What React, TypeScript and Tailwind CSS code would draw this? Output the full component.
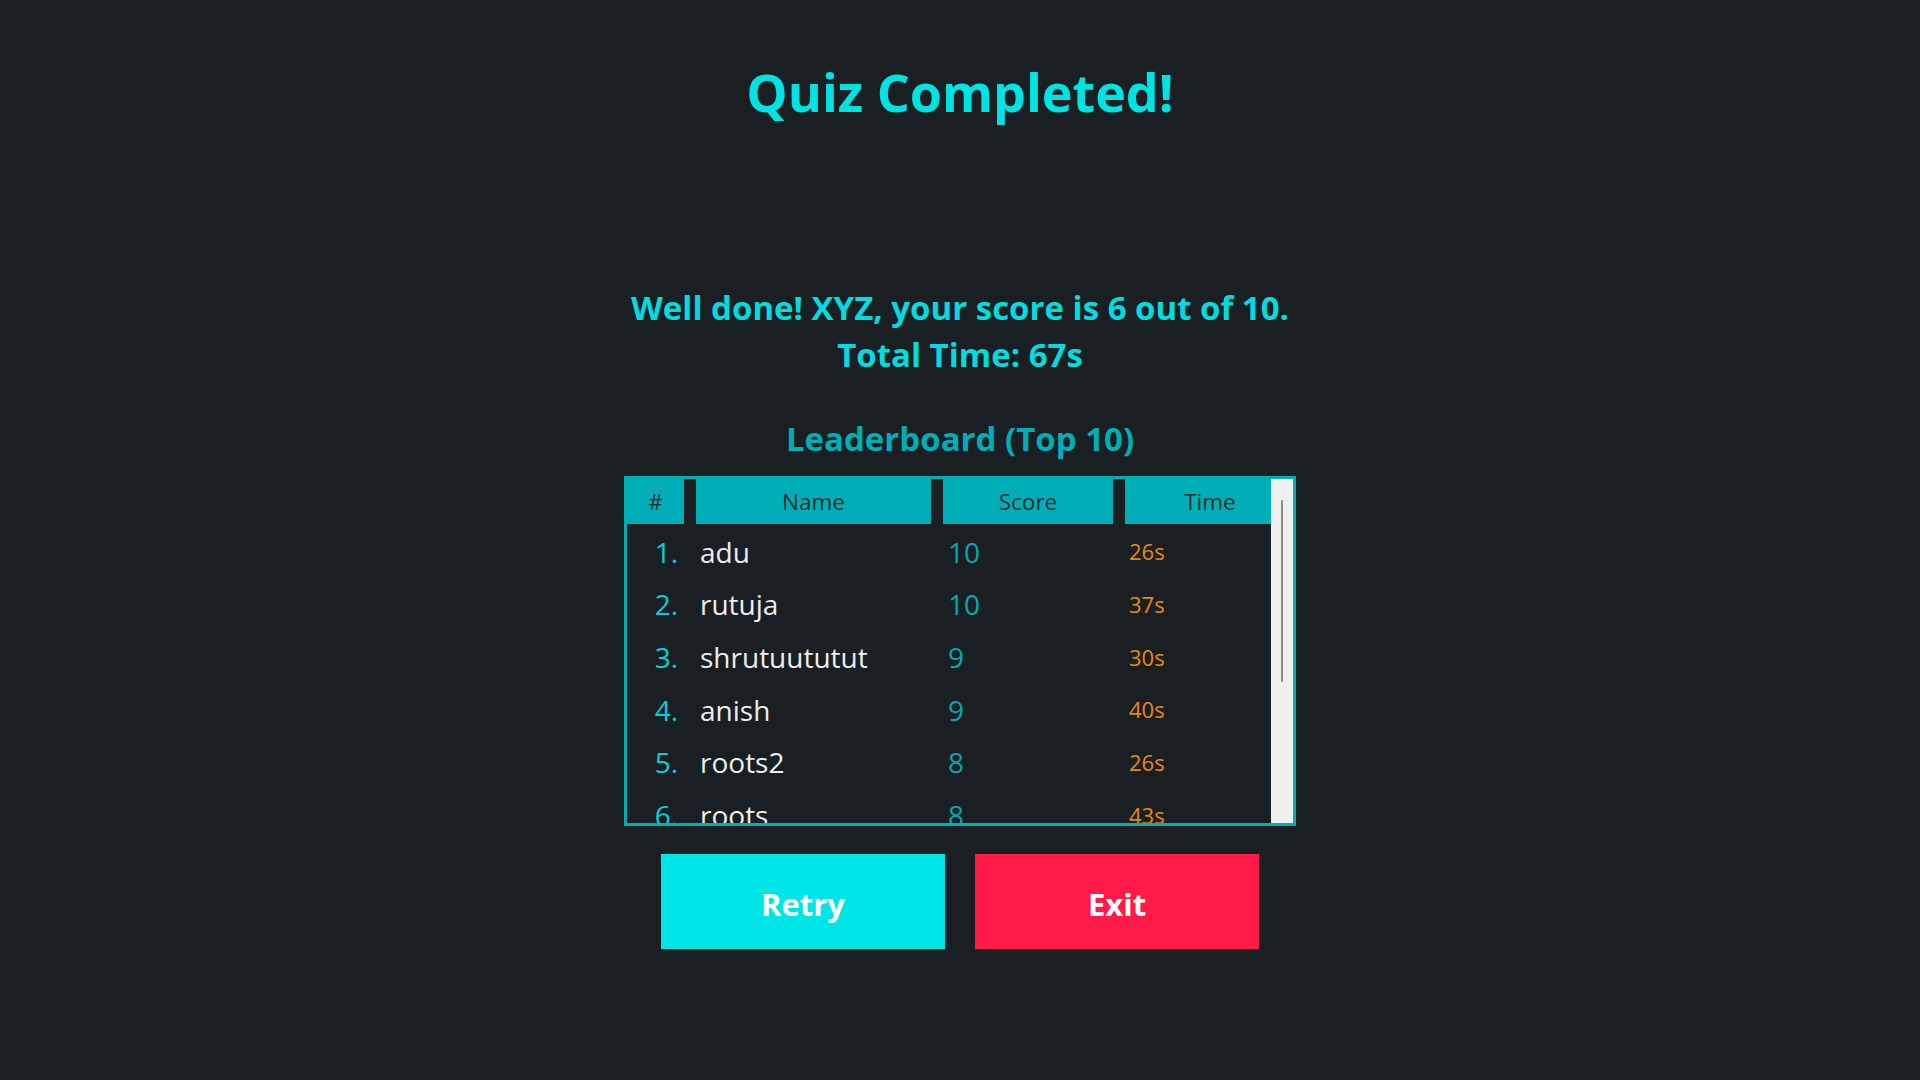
const LEADERS = [
  { name: "adu", score: 10, time: 26 },
  { name: "rutuja", score: 10, time: 37 },
  { name: "shrutuututut", score: 9, time: 30 },
  { name: "anish", score: 9, time: 40 },
  { name: "roots2", score: 8, time: 26 },
  { name: "roots", score: 8, time: 43 },
  { name: "meera", score: 7, time: 35 },
  { name: "kiran", score: 7, time: 48 },
  { name: "dev", score: 6, time: 31 },
  { name: "sam", score: 5, time: 52 },
];

const COLS = "grid grid-cols-[57px_235px_170px_146px] gap-x-[12px]";

export default function App() {
  return (
    <div className="min-h-screen w-full bg-[#191f23] flex flex-col items-center font-['Open_Sans',sans-serif]">
      <h1 className="mt-[61px] text-[52px] leading-[62px] font-bold text-[#00e3e3]">Quiz Completed!</h1>

      <p className="mt-[161px] text-center text-[33px] leading-[47px] font-bold text-[#00dcdf]">
        Well done! XYZ, your score is 6 out of 10.
        <br />
        Total Time: 67s
      </p>

      <h2 className="mt-[41px] text-[33px] leading-[40px] font-bold text-[#00aeb8]">Leaderboard (Top 10)</h2>

      <div className="mt-[17px] w-[672px] h-[350px] border-[3px] border-[#00aeb8] flex">
        {/* table body, clipped at the box edge */}
        <div className="w-[644px] h-full overflow-hidden">
          <div className={`${COLS} h-[45px] bg-[#191f23] text-[22.5px] text-[#1a2c30]`}>
            <div className="bg-[#00aeb8] flex items-center justify-center pt-[1px]">#</div>
            <div className="bg-[#00aeb8] flex items-center justify-center pt-[1px]">Name</div>
            <div className="bg-[#00aeb8] flex items-center justify-center pt-[1px]">Score</div>
            <div className="bg-[#00aeb8] flex items-center justify-center pt-[1px] pl-[24px]">Time</div>
          </div>
          {LEADERS.map((p, i) => (
            <div key={i} className={`${COLS} h-[52.65px] items-center pt-[3px]`}>
              <div className="text-right pr-[6px] text-[28px] text-[#00d2d8]">{i + 1}.</div>
              <div className="pl-[4px] text-[28px] text-[#eeeeee]">{p.name}</div>
              <div className="pl-[5px] text-[28px] text-[#00a9b4]">{p.score}</div>
              <div className="pl-[4px] text-[22px] text-[#e8890c]">{p.time}s</div>
            </div>
          ))}
        </div>
        {/* scrollbar */}
        <div className="w-[22px] h-full bg-[#f0f0f0] flex justify-center pt-[21px]">
          <div className="w-[2px] h-[182px] rounded-full bg-[#8a8a8a]" />
        </div>
      </div>

      <div className="mt-[28px] flex gap-[30px]">
        <button className="w-[284px] h-[95px] bg-[#00e5e5] text-white text-[31px] font-bold pt-[6px]">Retry</button>
        <button className="w-[284px] h-[95px] bg-[#ff1a47] text-white text-[31px] font-bold pt-[6px]">Exit</button>
      </div>
    </div>
  );
}
